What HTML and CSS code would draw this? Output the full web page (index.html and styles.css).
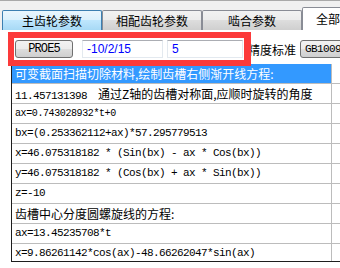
FILE: index.html
```html
<!DOCTYPE html>
<html lang="zh-CN">
<head>
  <meta charset="UTF-8">
  <meta name="viewport" content="width=device-width, initial-scale=1.0">
  <title>齿轮参数</title>
  <link rel="stylesheet" href="styles.css">
</head>
<body>
  <div class="tabs">
    <div class="tab hot">主齿轮参数</div>
    <div class="tab">相配齿轮参数</div>
    <div class="tab">啮合参数</div>
    <div class="tab active">全部参数</div>
  </div>
  <div class="panel">
    <div class="toolbar">
      <button class="btn">PROE5</button>
      <input class="field wide" type="text" value="-10/2/15">
      <input class="field" type="text" value="5">
      <span class="label">精度标准</span>
      <div class="combo">GB10095-88</div>
    </div>
    <div class="list">
      <div class="row selected"><div class="cell cn">可变截面扫描切除材料,绘制齿槽右侧渐开线方程:</div><div class="cell"></div></div>
      <div class="row"><div class="cell"><span class="mono">11.457131398</span><span class="cn gap">通过Z轴的齿槽对称面,应顺时旋转的角度</span></div><div class="cell"></div></div>
      <div class="row"><div class="cell mono small">ax=0.743028932*t+0</div><div class="cell"></div></div>
      <div class="row"><div class="cell mono">bx=(0.253362112+ax)*57.295779513</div><div class="cell"></div></div>
      <div class="row"><div class="cell mono">x=46.075318182 * (Sin(bx) - ax * Cos(bx))</div><div class="cell"></div></div>
      <div class="row"><div class="cell mono">y=46.075318182 * (Cos(bx) + ax * Sin(bx))</div><div class="cell"></div></div>
      <div class="row"><div class="cell mono">z=-10</div><div class="cell"></div></div>
      <div class="row"><div class="cell cn">齿槽中心分度圆螺旋线的方程:</div><div class="cell"></div></div>
      <div class="row"><div class="cell mono">ax=13.45235708*t</div><div class="cell"></div></div>
      <div class="row"><div class="cell mono">x=9.86261142*cos(ax)-48.66262047*sin(ax)</div><div class="cell"></div></div>
    </div>
    <div class="mark"></div>
  </div>
</body>
</html>
```

FILE: styles.css
```css
body {
  margin: 0;
  width: 340px;
  height: 268px;
  overflow: hidden;
  background-color: #f0f0f0;
  font-family: "Noto Sans CJK SC", sans-serif;
  font-size: 12px;
  color: #000;
}
.tabs {
  display: flex;
  align-items: flex-end;
  height: 29px;
  padding-left: 2px;
  border-top: 1px solid #a9a9a9;
}
.tab {
  box-sizing: border-box;
  flex: none;
  width: 100px;
  height: 20px;
  line-height: 19px;
  text-align: center;
  border: 1px solid #898c95;
  border-bottom: none;
  border-radius: 2px 2px 0 0;
  background: linear-gradient(#f2f2f2, #ebebeb 50%, #dddddd 50%, #cfcfcf);
}
.tab.hot {
  border-color: #3c7fb1;
  background: linear-gradient(#eaf6fd, #d9f0fc 50%, #bee6fd 50%, #a7d9f5);
}
.tab.active {
  width: 80px;
  height: 23px;
  line-height: 21px;
  text-align: left;
  padding-left: 13px;
  white-space: nowrap;
  overflow: hidden;
  background: #fff;
}
.panel {
  position: relative;
  height: 238px;
  background-color: #fff;
}
.toolbar {
  display: flex;
  align-items: center;
  height: 18px;
  padding: 10px 0 0 15px;
  overflow: hidden;
}
.toolbar > * {
  flex: none;
}
.btn {
  box-sizing: border-box;
  width: 58px;
  height: 18px;
  padding: 0;
  border: 1px solid #707070;
  border-radius: 3px;
  background: linear-gradient(#f2f2f2, #ebebeb 50%, #dddddd 50%, #cfcfcf);
  font-family: "Liberation Mono", monospace;
  font-size: 12px;
  letter-spacing: -0.9px;
  color: #000;
}
.field {
  box-sizing: border-box;
  width: 76px;
  height: 18px;
  margin-left: 4px;
  padding: 0 4px;
  border: 1px solid #e3e9ef;
  border-top-color: #abadb3;
  font-family: "Liberation Sans", sans-serif;
  font-size: 12px;
  color: #0000ff;
  outline: none;
}
.field.wide {
  width: 81px;
  margin-left: 9px;
}
.label {
  margin-left: 5px;
  white-space: nowrap;
}
.combo {
  box-sizing: border-box;
  width: 70px;
  height: 18px;
  margin-left: 4px;
  padding-left: 4px;
  line-height: 16px;
  border: 1px solid #707070;
  border-radius: 3px;
  background: linear-gradient(#f2f2f2, #ebebeb 50%, #dddddd 50%, #cfcfcf);
  font-family: "Liberation Mono", monospace;
  font-size: 11px;
  letter-spacing: -0.6px;
  white-space: nowrap;
  overflow: hidden;
}
.list {
  box-sizing: border-box;
  height: 198px;
  margin: 6px 0 0 11px;
  border-left: 1px solid #1e1e1e;
  border-bottom: 1px solid #1e1e1e;
  overflow: hidden;
}
.row {
  display: grid;
  grid-template-columns: 320px 1fr;
}
.cell {
  height: 19px;
  line-height: 19px;
  padding-left: 3px;
  border-bottom: 1px solid #bcbcbc;
  white-space: nowrap;
  overflow: hidden;
}
.cell:first-child {
  border-right: 1px solid #bcbcbc;
}
.selected .cell:first-child {
  background-color: #3399ff;
  color: #fff;
}
.mono {
  font-family: "Liberation Mono", monospace;
  font-size: 11px;
  letter-spacing: -0.6px;
}
.mono.small {
  font-size: 10px;
  letter-spacing: -0.4px;
}
.cn {
  font-family: "Noto Sans CJK SC", sans-serif;
  font-size: 12px;
  letter-spacing: 0;
}
.gap {
  margin-left: 11px;
}
.mark {
  position: absolute;
  left: 8px;
  top: 2px;
  box-sizing: border-box;
  width: 243px;
  height: 34px;
  border: 6px solid #fc3a3a;
  border-right-width: 7px;
}
```
